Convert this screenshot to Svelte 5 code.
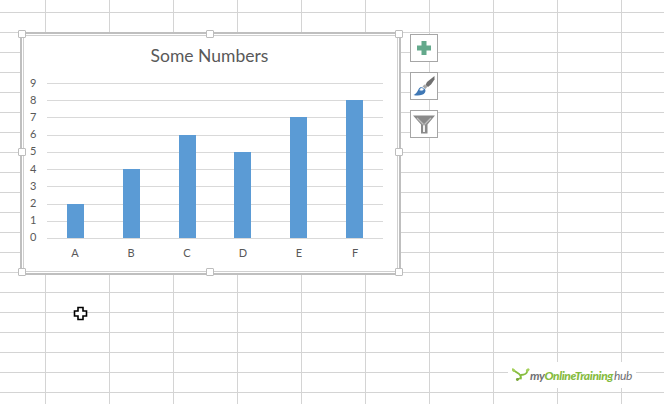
<script>
    const values = [
        { name: 'A', value: 2 },
        { name: 'B', value: 4 },
        { name: 'C', value: 6 },
        { name: 'D', value: 5 },
        { name: 'E', value: 7 },
        { name: 'F', value: 8 },
    ];
    const ticks = [9, 8, 7, 6, 5, 4, 3, 2, 1, 0];
    const step = 155 / 9;
    const handles = ['tl', 'tc', 'tr', 'ml', 'mr', 'bl', 'bc', 'br'];
</script>

<div class="sheet">
    <div class="chart-frame">
        <div class="chart">
            <h1>Some Numbers</h1>
            <div class="body">
                <div class="y-axis">
                    {#each ticks as tick}
                        <span style="height: {step}px">{tick}</span>
                    {/each}
                </div>
                <div class="main">
                    <div class="plot">
                        {#each ticks.slice(1) as tick}
                            <div class="row"></div>
                        {/each}
                        <div class="bars">
                            {#each values as item}
                                <div class="slot">
                                    <div class="bar" style="height: {item.value * step}px"></div>
                                </div>
                            {/each}
                        </div>
                    </div>
                    <div class="x-axis">
                        {#each values as item}
                            <span>{item.name}</span>
                        {/each}
                    </div>
                </div>
            </div>
        </div>
        {#each handles as handle}
            <div class="handle {handle}"></div>
        {/each}
    </div>

    <div class="tools">
        <button aria-label="Chart elements">
            <svg width="16" height="16" viewBox="0 0 16 16">
                <path d="M5.500 1h5v4.500H15v5h-4.500V15h-5v-4.500H1v-5h4.500z" fill="#64a98c" />
            </svg>
        </button>
        <button aria-label="Chart styles">
            <svg width="24" height="24" viewBox="0 0 24 24">
                <path d="M22.500 2l-7.500 6-1.500 3 2.500 2 3-2.500 3.500-5z" fill="#707070" />
                <path d="M12.500 10.500L10.500 12.500l3 2.500 2-2.500z" fill="#a8a8a8" />
                <path d="M9.500 13C6.500 13.500 6.500 16 5 18c-1 1.300-2 2.200-3.500 3 4 1 9.500.8 11.500-2.500.7-1.400.6-2.800-.3-3.800z" fill="#3f78b5" />
                <path d="M9.500 13.800c-1.300.4-1.800 1.500-1.800 2.500 1 .6 2.800.5 3.800-.5.4-.5.2-1-.2-1.400z" fill="#ffffff" stroke="#8fb4da" stroke-width=".6" />
            </svg>
        </button>
        <button aria-label="Chart filters">
            <svg width="24" height="24" viewBox="0 0 24 24">
                <path d="M1 3.500h22L15.500 12.500v9H9V12.500z" fill="#8a8a8a" />
                <path d="M11 13.500l1-1 1 1v6.500h-2z" fill="#f2f2f2" />
                <path d="M5 6l6.500 6.500M19 6l-6.500 6.500" stroke="#c0c0c0" stroke-width="1.200" />
            </svg>
        </button>
    </div>

    <svg class="cursor" width="15" height="15" viewBox="0 0 15 15">
        <path d="M5 1.500h5v3.500h3.500v5H10v3.500H5V10H1.500V5H5z" fill="#fff" stroke="#000" stroke-width="1.600" />
    </svg>

    <div class="logo">
        <svg width="18" height="16" viewBox="0 0 20 16">
            <path d="M2 3l6 4c1.500 1.200 2 3 2 5M17 3c0 3-3 5-7 5M10 11l-4 2" fill="none" stroke="#86bc3f" stroke-width="2" stroke-linecap="round" />
            <path d="M17 3l1-1M2 3L1 2" stroke="#a4d05a" stroke-width="3" stroke-linecap="round" />
            <circle cx="6" cy="13" r="1.600" fill="#7aa53a" />
        </svg>
        <span class="my">my</span><span class="brand">OnlineTraining</span><span class="hub">hub</span>
    </div>
</div>

<style>
    :global(body) {
        margin: 0;
        background: #fff;
    }

    .sheet {
        position: relative;
        width: 664px;
        height: 404px;
        overflow: hidden;
        font-family: Lato, "Liberation Sans", sans-serif;
        background-color: #fff;
        background-image:
            repeating-linear-gradient(to bottom, transparent 0 12px, #d4d4d4 12px 13px, transparent 13px 20px),
            repeating-linear-gradient(to right, transparent 0 45px, #d4d4d4 45px 46px, transparent 46px 64px);
    }

    .chart-frame {
        position: absolute;
        left: 20px;
        top: 32px;
        width: 375px;
        height: 237px;
        padding: 1px;
        border: 2px solid #bfbfbf;
        background: #fff;
    }

    .chart {
        height: 100%;
        box-sizing: border-box;
        border: 1px solid #d0d0d0;
        display: flex;
        flex-direction: column;
    }

    h1 {
        margin: 0;
        padding-top: 9px;
        padding-right: 2px;
        height: 32px;
        text-align: center;
        font-size: 17.500px;
        line-height: 22px;
        font-weight: 400;
        color: #595959;
    }

    .body {
        display: flex;
        padding-top: 6px;
    }

    .y-axis {
        width: 23px;
        margin-top: -9.600px;
        display: flex;
        flex-direction: column;
    }

    .y-axis span {
        padding-left: 6px;
        display: flex;
        align-items: center;
        font-size: 11px;
        color: #595959;
    }

    .plot {
        position: relative;
        width: 336px;
        height: 155px;
        display: flex;
        flex-direction: column;
        border-bottom: 1px solid #d9d9d9;
    }

    .row {
        flex: 1;
        border-top: 1px solid #d9d9d9;
    }

    .bars {
        position: absolute;
        inset: 0 0.500px 0 0.500px;
        display: flex;
        align-items: flex-end;
    }

    .slot {
        flex: 1;
        display: flex;
        justify-content: center;
    }

    .bar {
        width: 17px;
        background: #5b9bd5;
    }

    .x-axis {
        display: flex;
        padding-top: 7px;
    }

    .x-axis span {
        flex: 1;
        text-align: center;
        font-size: 11px;
        line-height: 14px;
        color: #595959;
    }

    .handle {
        position: absolute;
        width: 6px;
        height: 6px;
        background: #fff;
        border: 1px solid #bdbdbd;
        border-radius: 1px;
    }

    .tl, .tc, .tr { top: -4px; }
    .ml, .mr { top: 114px; }
    .bl, .bc, .br { bottom: -3px; }
    .tl, .ml, .bl { left: -4px; }
    .tc, .bc { left: 184px; }
    .tr, .mr, .br { right: -4px; }

    .tools {
        position: absolute;
        left: 410px;
        top: 34px;
        display: flex;
        flex-direction: column;
        gap: 10px;
    }

    .tools button {
        width: 28px;
        height: 28px;
        padding: 0;
        border: 1px solid #a6a6a6;
        background: #fff;
        display: flex;
        align-items: center;
        justify-content: center;
    }

    .cursor {
        position: absolute;
        left: 73px;
        top: 306px;
    }

    .logo {
        position: absolute;
        left: 508px;
        top: 362px;
        width: 128px;
        height: 26px;
        background: #fff;
        display: flex;
        align-items: center;
        padding-left: 4px;
        box-sizing: border-box;
        font-size: 12px;
        font-style: italic;
        letter-spacing: -0.400px;
        white-space: nowrap;
    }

    .my, .hub {
        color: #6f7073;
        font-weight: 700;
    }

    .brand {
        color: #86bc3f;
        font-weight: 900;
    }

    .hub {
        margin-left: 1px;
        font-weight: 400;
    }
</style>
